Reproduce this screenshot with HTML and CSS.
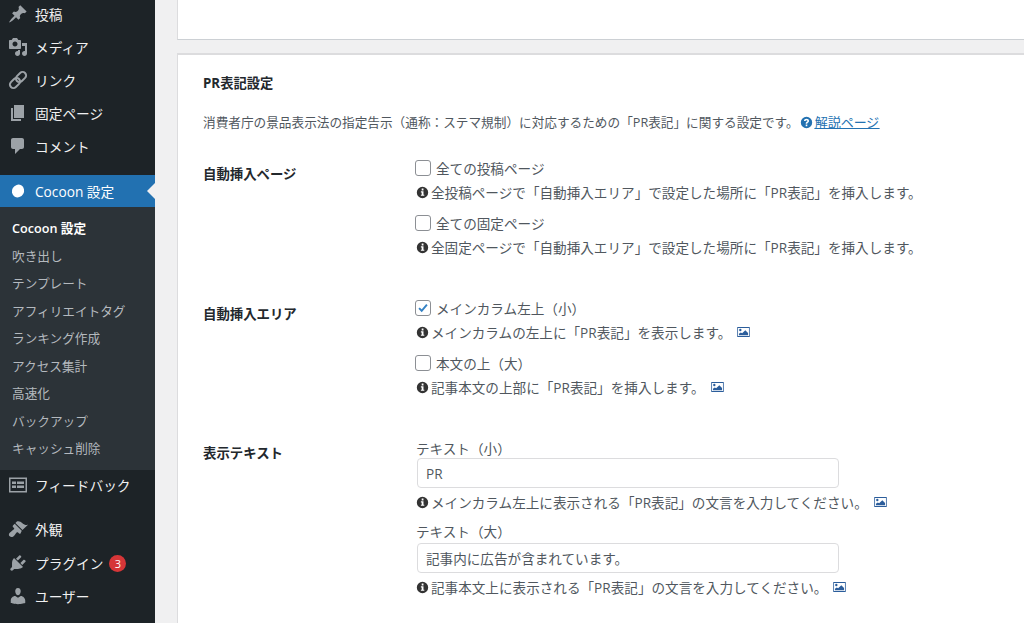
FILE: index.html

```html
<!DOCTYPE html>
<html lang="ja">
<head>
  <meta charset="UTF-8" />
  <title>PR表記設定</title>
  <link rel="stylesheet" href="styles.css">
</head>
<body>
  <div class="layout">
    <nav class="sidebar">
      <ul class="menu">
        <li class="menu-item">
          <svg class="menu-icon" viewBox="0 0 20 20"><path d="M10.44 3.02l1.82-1.82 6.36 6.35-1.83 1.82c-1.05-.68-2.48-.57-3.41.36l-.75.75c-.92.93-1.04 2.35-.35 3.41l-1.83 1.82-2.41-2.41-2.8 2.79c-.42.42-3.38 2.71-3.8 2.29s1.86-3.39 2.28-3.81l2.79-2.79L4.1 9.36l1.83-1.82c1.05.69 2.48.57 3.4-.36l.75-.75c.93-.92 1.05-2.35.36-3.41z"/></svg>
          <span>投稿</span>
        </li>
        <li class="menu-item">
          <svg class="menu-icon" viewBox="0 0 20 20"><path fill-rule="evenodd" d="M13 11V4c0-.55-.45-1-1-1h-1.670L9 1H5L3.670 3H2c-.55 0-1 .45-1 1v7c0 .55.45 1 1 1h10c.55 0 1-.45 1-1zM7 4.500c1.380 0 2.500 1.120 2.500 2.500S8.380 9.500 7 9.500 4.500 8.380 4.500 7 5.620 4.500 7 4.500zM14 6h5v10.500c0 1.380-1.120 2.500-2.500 2.500S14 17.880 14 16.500s1.120-2.500 2.500-2.500c.17 0 .34.02.5.05V9h-3V6zm-4 8.050V13h2v3.500c0 1.380-1.120 2.500-2.500 2.500S7 17.880 7 16.500 8.120 14 9.500 14c.17 0 .34.02.5.05z"/></svg>
          <span>メディア</span>
        </li>
        <li class="menu-item">
          <svg class="menu-icon" viewBox="0 0 20 20"><g class="chain" transform="rotate(-45 10 10)"><rect x="0" y="6.500" width="11.500" height="7" rx="3.500"/><rect x="8.500" y="6.500" width="11.500" height="7" rx="3.500"/></g></svg>
          <span>リンク</span>
        </li>
        <li class="menu-item">
          <svg class="menu-icon" viewBox="0 0 20 20"><path d="M6 15V2h10v13H6zm-1 1h8v2H3V5h2v11z"/></svg>
          <span>固定ページ</span>
        </li>
        <li class="menu-item">
          <svg class="menu-icon" viewBox="0 0 20 20"><path d="M5 2h9c1.100 0 2 .9 2 2v7c0 1.100-.9 2-2 2h-2l-5 5v-5H5c-1.100 0-2-.9-2-2V4c0-1.100.9-2 2-2z"/></svg>
          <span>コメント</span>
        </li>
        <li class="menu-item current">
          <svg class="menu-icon" viewBox="0 0 20 20"><ellipse cx="10" cy="10" rx="6" ry="6.500" transform="rotate(30 10 10)"/></svg>
          <span>Cocoon 設定</span>
        </li>
        <li>
          <ul class="submenu">
            <li class="active">Cocoon 設定</li>
            <li>吹き出し</li>
            <li>テンプレート</li>
            <li>アフィリエイトタグ</li>
            <li>ランキング作成</li>
            <li>アクセス集計</li>
            <li>高速化</li>
            <li>バックアップ</li>
            <li>キャッシュ削除</li>
          </ul>
        </li>
        <li class="menu-item feedback">
          <svg class="menu-icon" viewBox="0 0 20 20"><path fill-rule="evenodd" d="M1 2.500h18v15H1zM2.500 4v12h15V4zM4 6.500h4V9H4zm5 0h7V9H9zm-5 4h4V13H4zm5 0h7V13H9z"/></svg>
          <span>フィードバック</span>
        </li>
        <li class="menu-item appearance">
          <svg class="menu-icon" viewBox="0 0 20 20"><path d="M14.480 11.060L7.410 3.990l1.500-1.500c.5-.56 2.300-.47 3.510.32 1.210.8 1.430 1.280 2.910 2.100 1.180.64 2.450 1.260 4.670.88zm-.71.710L6.700 4.700 4.930 6.470c-.39.39-.39 1.020 0 1.410l1.060 1.060c.39.39.39 1.030 0 1.420-.6.6-1.430 1.110-2.210 1.690-.35.26-.7.53-1.010.84C1.430 13.730 0 15.570 1.710 17.290s3.560.28 4.410-.57c.31-.31.58-.66.84-1.010.58-.78 1.090-1.610 1.690-2.210.39-.39 1.020-.39 1.410 0l1.060 1.060c.39.39 1.020.39 1.410 0z"/></svg>
          <span>外観</span>
        </li>
        <li class="menu-item">
          <svg class="menu-icon" viewBox="0 0 20 20"><path d="M13.110 4.360L9.870 7.600 8 5.730l3.240-3.240c.35-.34 1.050-.2 1.560.32.52.51.66 1.210.31 1.550zm-8 1.770l.91-1.120 9.010 9.010-1.190.84c-.71.71-2.630 1.160-3.820 1.160H6.140L4.900 17.260c-.59.59-1.540.59-2.120 0-.59-.58-.59-1.530 0-2.120l1.240-1.240v-3.880c0-1.130.4-3.020 1.090-3.890zm7.260 3.970l3.240-3.240c.34-.35 1.040-.21 1.550.31.52.51.66 1.210.31 1.550l-3.240 3.250z"/></svg>
          <span>プラグイン</span>
          <span class="badge">3</span>
        </li>
        <li class="menu-item">
          <svg class="menu-icon" viewBox="0 0 20 20"><path d="M10 9.250c-2.270 0-2.730-3.440-2.730-3.440C7 4.020 7.820 2 9.970 2c2.160 0 2.980 2.020 2.710 3.810 0 0-.41 3.440-2.680 3.440zm0 2.570L12.720 10c2.390 0 4.520 2.330 4.520 4.530v2.490s-3.650 1.130-7.240 1.130c-3.650 0-7.240-1.130-7.240-1.130v-2.490c0-2.250 1.940-4.480 4.470-4.480z"/></svg>
          <span>ユーザー</span>
        </li>
      </ul>
    </nav>

    <main class="content">
      <div class="card card-top"></div>
      <section class="card settings">
        <h2>PR表記設定</h2>
        <p class="intro">消費者庁の景品表示法の指定告示（通称：ステマ規制）に対応するための「PR表記」に関する設定です。<a class="doc-link" href="#"><svg class="fa" viewBox="0 0 16 16"><path fill="#2271b1" fill-rule="evenodd" d="M8 1a7 7 0 1 1 0 14A7 7 0 0 1 8 1zM7 10.500v2h2v-2zM8 3.500c-1.800 0-3 1-3.100 2.600h1.900c.1-.6.5-1 1.200-1s1.100.4 1.100.9c0 .5-.3.8-.9 1.200-.8.5-1.200 1-1.200 2v.4h1.900v-.3c0-.5.2-.7.8-1.100C10.600 7.600 11.100 7 11.100 6c0-1.500-1.300-2.500-3.100-2.500z"/></svg><span>解説ページ</span></a></p>

        <div class="setting-row">
          <div class="setting-label">自動挿入ページ</div>
          <div class="setting-fields">
            <div class="check-line"><span class="checkbox"></span>全ての投稿ページ</div>
            <div class="help"><svg class="fa" viewBox="0 0 16 16"><use href="#i-info"/></svg>全投稿ページで「自動挿入エリア」で設定した場所に「PR表記」を挿入します。</div>
            <div class="check-line next"><span class="checkbox"></span>全ての固定ページ</div>
            <div class="help"><svg class="fa" viewBox="0 0 16 16"><use href="#i-info"/></svg>全固定ページで「自動挿入エリア」で設定した場所に「PR表記」を挿入します。</div>
          </div>
        </div>

        <div class="setting-row">
          <div class="setting-label">自動挿入エリア</div>
          <div class="setting-fields">
            <div class="check-line">
              <span class="checkbox checked"><svg viewBox="0 0 16 16"><path d="M3.500 8.200l3 3 6-7" fill="none" stroke="#3582c4" stroke-width="2.200"/></svg></span>メインカラム左上（小）
            </div>
            <div class="help"><svg class="fa" viewBox="0 0 16 16"><use href="#i-info"/></svg>メインカラムの左上に「PR表記」を表示します。<svg class="pic" viewBox="0 0 14 11"><use href="#i-pic"/></svg></div>
            <div class="check-line next"><span class="checkbox"></span>本文の上（大）</div>
            <div class="help"><svg class="fa" viewBox="0 0 16 16"><use href="#i-info"/></svg>記事本文の上部に「PR表記」を挿入します。<svg class="pic" viewBox="0 0 14 11"><use href="#i-pic"/></svg></div>
          </div>
        </div>

        <div class="setting-row third">
          <div class="setting-label">表示テキスト</div>
          <div class="setting-fields">
            <label class="field-label">テキスト（小）</label>
            <input class="text-input" type="text" value="PR" />
            <div class="help"><svg class="fa" viewBox="0 0 16 16"><use href="#i-info"/></svg>メインカラム左上に表示される「PR表記」の文言を入力してください。<svg class="pic" viewBox="0 0 14 11"><use href="#i-pic"/></svg></div>
            <label class="field-label second">テキスト（大）</label>
            <input class="text-input" type="text" value="記事内に広告が含まれています。" />
            <div class="help"><svg class="fa" viewBox="0 0 16 16"><use href="#i-info"/></svg>記事本文上に表示される「PR表記」の文言を入力してください。<svg class="pic" viewBox="0 0 14 11"><use href="#i-pic"/></svg></div>
          </div>
        </div>
      </section>
    </main>
  </div>

  <svg class="defs" aria-hidden="true">
    <symbol id="i-info" viewBox="0 0 16 16">
      <path fill="#333" fill-rule="evenodd" d="M8 1a7 7 0 1 1 0 14A7 7 0 0 1 8 1zM7 3.200v2.300h2.200V3.200zM6 6.600v1.300h1v2.800H6V12h4.200v-1.300h-1V6.600z"/>
    </symbol>
    <symbol id="i-pic" viewBox="0 0 14 11">
      <path fill="#2b5d9b" fill-rule="evenodd" d="M0 0h14v11H0zm1 1v9h12V1zm2.500 1a1.300 1.300 0 1 1 0 2.600 1.300 1.300 0 0 1 0-2.600zM2 9V7.500L4 6l1.500 1L9 3.500l3 3V9z"/>
    </symbol>
  </svg>
</body>
</html>
```

FILE: styles.css

```css
* {
  box-sizing: border-box;
}

html, body {
  height: 100%;
}

body {
  margin: 0;
  overflow: hidden;
  background: #f0f0f1;
  color: #50575e;
  font-family: "Open Sans", "Noto Sans CJK JP", sans-serif;
  font-size: 13.6px;
}

ul {
  list-style: none;
  margin: 0;
  padding: 0;
}

.defs {
  display: none;
}

.layout {
  display: flex;
  height: 100%;
  overflow: hidden;
}

/* sidebar */
.sidebar {
  flex: 0 0 155px;
  background: #1d2327;
  color: #f0f0f1;
  font-size: 13.7px;
}

.menu {
  margin-top: -3px;
}

.menu-item {
  position: relative;
  display: flex;
  align-items: center;
  height: 33px;
  padding-left: 8px;
}

.menu-icon {
  flex: 0 0 20px;
  width: 20px;
  height: 20px;
  margin-right: 7px;
  fill: #9ca2a7;
}

.chain {
  fill: none;
  stroke: #9ca2a7;
  stroke-width: 2;
}

.menu-item.current {
  height: 32px;
  margin-top: 13px;
  background: #2271b1;
  color: #fff;
}

.menu-item.current .menu-icon {
  fill: #fff;
}

.menu-item.current::after {
  content: "";
  position: absolute;
  right: 0;
  top: 8px;
  border: 8px solid transparent;
  border-right-color: #f0f0f1;
  border-left-width: 0;
}

.menu-item.feedback {
  padding-bottom: 2px;
}

.menu-item.appearance {
  height: 34px;
  margin-top: 10px;
  padding-bottom: 2px;
}

.submenu {
  background: #2c3338;
  color: #b4b9be;
  padding: 8px 0 7px 12px;
  font-size: 12.65px;
}

.submenu li {
  height: 27.5px;
  line-height: 27px;
}

.submenu .active {
  color: #fff;
  font-weight: 600;
}

.badge {
  display: inline-block;
  width: 17px;
  height: 17px;
  margin-left: 6px;
  border-radius: 50%;
  background: #d63638;
  color: #fff;
  font-size: 11px;
  line-height: 17px;
  text-align: center;
}

/* main */
.content {
  flex: 1;
  min-width: 0;
  padding-left: 22px;
}

.card {
  margin-right: -10px;
  background: #fff;
  border: 1px solid #dcdcde;
  border-bottom-color: #ccd0d4;
}

.card-top {
  height: 41px;
  margin-top: -1px;
  border-top: 0;
}

.settings {
  margin-top: 13px;
  padding: 18px 25px 40px;
  border-top: 2px solid #dcdcde;
}

h2 {
  margin: 0;
  font-size: 13.3px;
  font-weight: 700;
  line-height: 20px;
  color: #23282d;
}

.intro {
  margin: 19px 0 0;
  font-size: 12.65px;
  line-height: 20px;
}

.doc-link {
  margin-left: 1px;
  color: #2271b1;
  font-size: 13px;
}

.doc-link span {
  text-decoration: underline;
}

.setting-row {
  display: grid;
  grid-template-columns: 213px 1fr;
}

.setting-row + .setting-row {
  margin-top: 38px;
}

.intro + .setting-row {
  margin-top: 25px;
}

.setting-label {
  padding-top: 7px;
  font-size: 13.4px;
  font-weight: 700;
  line-height: 20px;
  color: #23282d;
}

.third .setting-label {
  padding-top: 6px;
}

.check-line {
  display: flex;
  align-items: center;
  height: 23px;
  padding-bottom: 2px;
}

.check-line.next {
  margin-top: 8px;
}

.checkbox {
  flex: 0 0 16px;
  width: 16px;
  height: 16px;
  margin-left: -1px;
  margin-right: 5px;
  background: #fff;
  border: 1px solid #8c8f94;
  border-radius: 3px;
}

.checkbox svg {
  display: block;
  width: 14px;
  height: 14px;
}

.help {
  display: flex;
  align-items: center;
  height: 24px;
}

.fa {
  flex: 0 0 13px;
  width: 13px;
  height: 13px;
  margin-right: 2px;
  vertical-align: -2px;
}

.pic {
  flex: 0 0 13px;
  width: 13px;
  height: 10px;
  margin-left: 6px;
}

.field-label {
  display: block;
  height: 21px;
  padding-top: 3px;
  line-height: 18px;
}

.field-label.second {
  height: 23px;
  margin-top: 6px;
}

.text-input {
  display: block;
  width: 422px;
  height: 30px;
  margin: 0 0 2px 1px;
  padding: 0 8px;
  background: #fff;
  border: 1px solid #dcdcde;
  border-radius: 4px;
  color: #50575e;
  font-family: inherit;
  font-size: 13.6px;
}
```
